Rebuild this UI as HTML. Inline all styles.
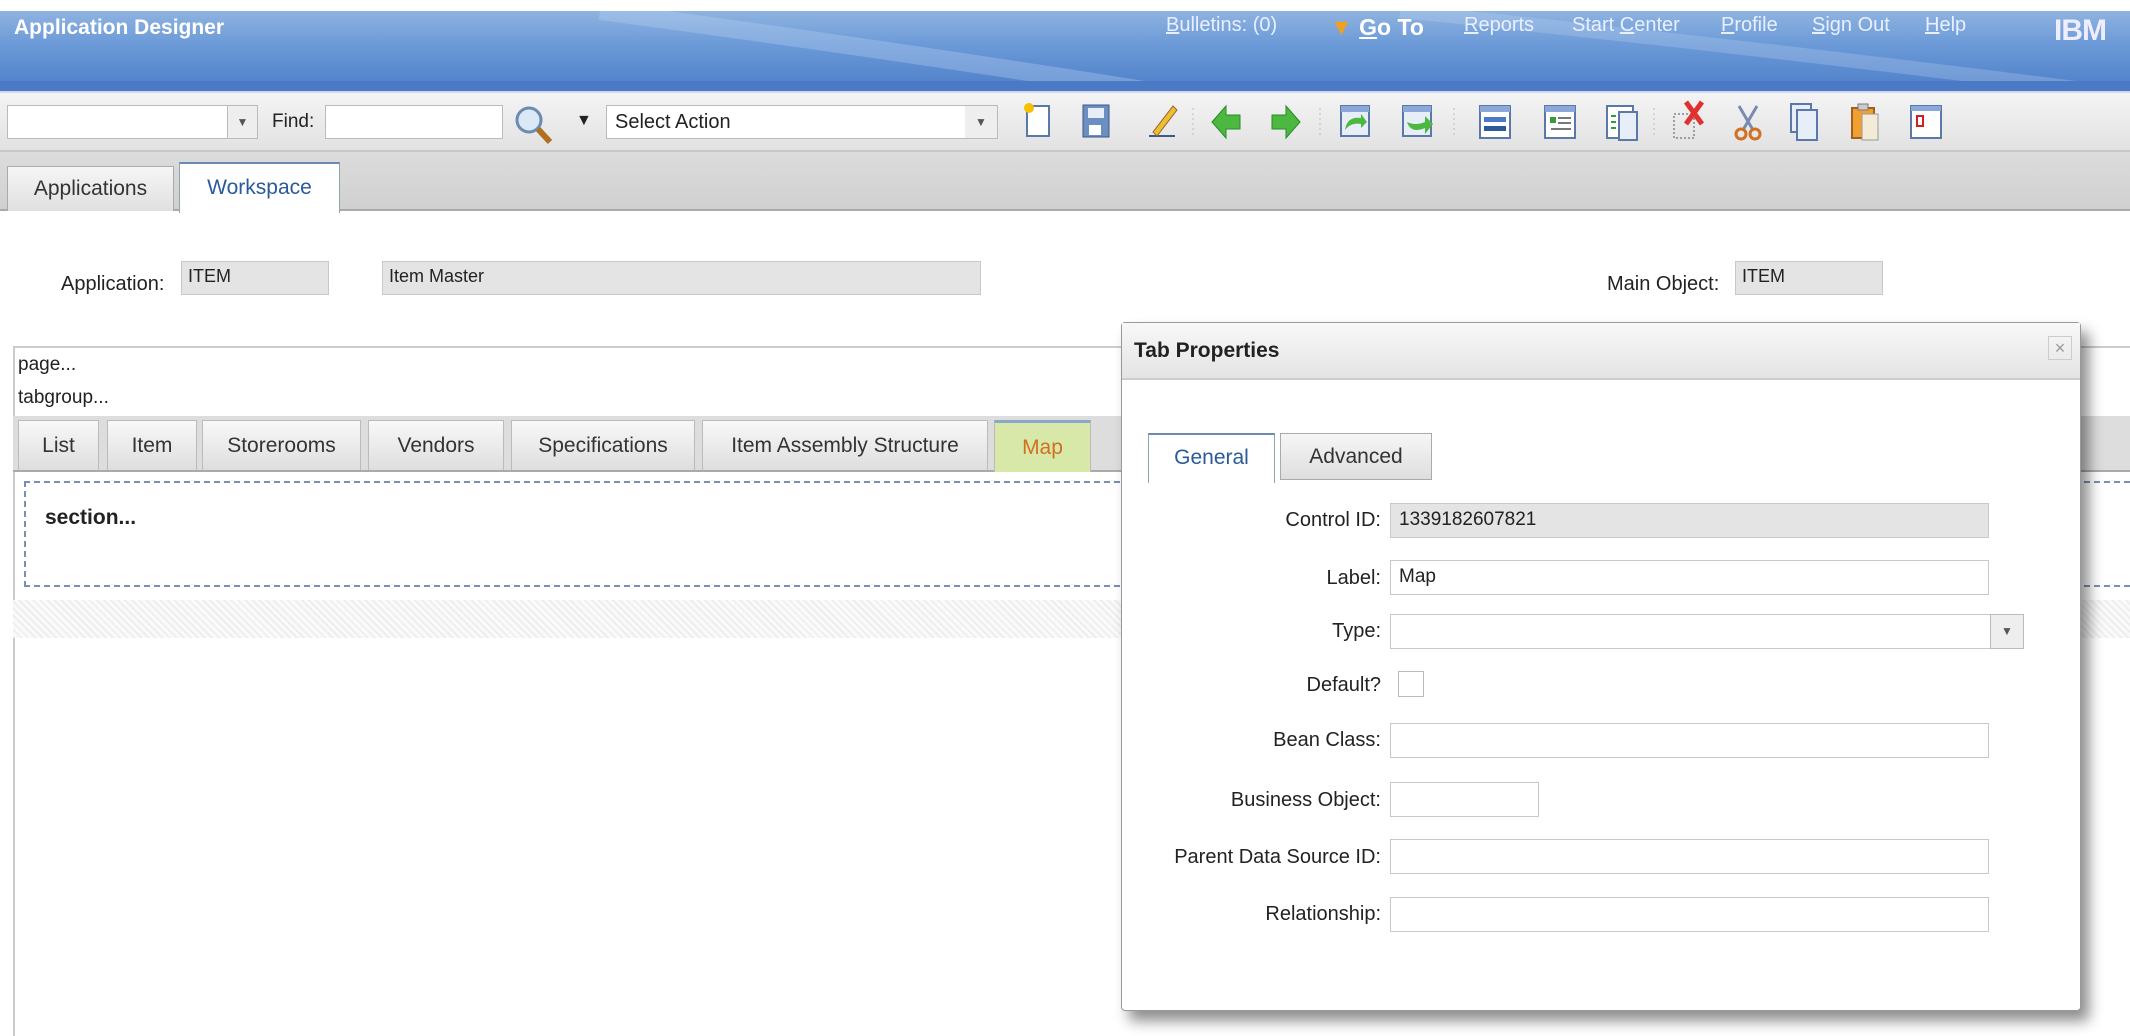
<!DOCTYPE html>
<html><head><meta charset="utf-8"><style>
*{box-sizing:border-box;margin:0;padding:0}
body{width:2130px;height:1032px;overflow:hidden;background:#fff;font-family:"Liberation Sans",Arial,sans-serif;color:#222;position:relative}
.a{position:absolute}
.hdr{left:0;top:11px;width:2130px;height:80px;background:linear-gradient(180deg,#8fb3e0 0%,#6d9bd8 40%,#5585cc 85%,#4a7bc8 100%)}
.hl{color:#e8f0ff;font-size:20px;top:14px}
.tb{left:0;top:91px;width:2130px;height:61px;background:linear-gradient(#f4f4f4,#e2e2e2);border-top:2px solid #cfd8e6;border-bottom:2px solid #c8c8c8}
.inp{background:#fff;border:1px solid #bbb}
.tabbar{left:0;top:152px;width:2130px;height:59px;background:linear-gradient(#dcdcdc,#d0d0d0);border-bottom:2px solid #aaa}
.lbl{font-size:19px;color:#222}
.gin{background:#e4e4e4;border:1px solid #c8c8c8;font-size:18px;padding:4px 6px}
.it{top:420px;height:50px;background:linear-gradient(#f8f8f8,#dedede);border:1px solid #bbb;border-bottom:none;font-size:21px;color:#333;text-align:center;line-height:50px}
.fl{font-size:20px;text-align:right;width:330px;left:1051px}
.fi{left:1390px;width:599px;height:35px;background:#fff;border:1px solid #c8c8c8}
</style></head><body>
<div class="a hdr">
<svg class="a" style="left:0;top:0" width="2130" height="80"><path d="M600 0 Q900 40 1150 80" stroke="#b8d0f0" stroke-width="18" fill="none" opacity=".35"/><path d="M1400 0 Q1700 30 2100 80" stroke="#b8d0f0" stroke-width="14" fill="none" opacity=".3"/><rect y="70" width="2130" height="10" fill="#4a79c6"/></svg>
<div class="a" style="left:14px;top:5px;color:#fff;font-weight:bold;font-size:21px">Application Designer</div>
<div class="a hl" style="left:1166px;top:3px"><u>B</u>ulletins: (0)</div>
<div class="a" style="left:1330px;top:3px;color:#fff;font-size:23px;font-weight:bold"><span style="color:#f0a020">▼</span> <u>G</u>o To</div>
<div class="a hl" style="left:1464px;top:3px"><u>R</u>eports</div>
<div class="a hl" style="left:1572px;top:3px">Start <u>C</u>enter</div>
<div class="a hl" style="left:1721px;top:3px"><u>P</u>rofile</div>
<div class="a hl" style="left:1812px;top:3px"><u>S</u>ign Out</div>
<div class="a hl" style="left:1925px;top:3px"><u>H</u>elp</div>
<div class="a" style="left:2054px;top:3px;color:#eef;font-size:30px;font-weight:bold;letter-spacing:-1px">IBM</div>
</div>
<div class="a tb"></div>
<div class="a inp" style="left:7px;top:105px;width:251px;height:34px"></div>
<div class="a" style="left:227px;top:105px;width:31px;height:34px;background:#eee;border:1px solid #bbb;font-size:12px;text-align:center;line-height:32px;color:#555">▼</div>
<div class="a lbl" style="left:272px;top:111px">Find:</div>
<div class="a inp" style="left:325px;top:105px;width:178px;height:34px"></div>
<svg class="a" style="left:512px;top:104px" width="44" height="44"><circle cx="17" cy="16" r="12" fill="#dbe9f7" stroke="#6c8bb0" stroke-width="3"/><path d="M26 25 L38 38" stroke="#b07020" stroke-width="6"/></svg>
<div class="a" style="left:576px;top:112px;font-size:16px">▼</div>
<div class="a inp" style="left:606px;top:105px;width:392px;height:34px;font-size:20px;padding:5px 8px">Select Action</div>
<div class="a" style="left:965px;top:106px;width:32px;height:32px;background:#eee;font-size:12px;text-align:center;line-height:32px;color:#555">▼</div>
<svg class="a" style="left:1008px;top:100px" width="940" height="44">
<g transform="translate(15,0)"><rect x="4" y="6" width="22" height="30" fill="#fff" stroke="#5a78a8" stroke-width="2"/><circle cx="6" cy="8" r="5" fill="#f5c000"/></g>
<g transform="translate(73,0)"><rect x="2" y="5" width="26" height="32" fill="#6d8ec0" stroke="#3a5a8a"/><rect x="7" y="8" width="16" height="10" fill="#e8eef8"/><rect x="8" y="25" width="12" height="10" fill="#fff"/></g>
<g transform="translate(137,0)"><path d="M4 36 L30 36" stroke="#3a5a8a" stroke-width="2"/><path d="M8 32 L28 6 L32 10 L12 36Z" fill="#e8c030" stroke="#a06030"/></g>
<path d="M185 8 V38 M312 8 V38 M446 8 V38 M646 8 V38" stroke="#bbb" stroke-dasharray="2 3"/>
<g transform="translate(202,0)"><path d="M2 22 L16 6 V15 H30 V29 H16 V38Z" fill="#4cb840" stroke="#2a8a2a"/></g>
<g transform="translate(262,0)"><path d="M30 22 L16 6 V15 H2 V29 H16 V38Z" fill="#4cb840" stroke="#2a8a2a"/></g>
<g transform="translate(331,0)"><rect x="2" y="6" width="28" height="30" fill="#e8eef8" stroke="#5a78a8" stroke-width="2"/><rect x="2" y="6" width="28" height="6" fill="#8aa8d8"/><path d="M6 30 Q8 16 22 18 L22 14 L28 22 L22 28 L22 24 Q12 22 6 30Z" fill="#4cb840"/></g>
<g transform="translate(393,0)"><rect x="2" y="6" width="28" height="30" fill="#e8eef8" stroke="#5a78a8" stroke-width="2"/><rect x="2" y="6" width="28" height="6" fill="#8aa8d8"/><path d="M6 22 Q10 34 24 28 L24 34 L32 24 L24 16 L24 22 Q14 26 6 22Z" fill="#4cb840"/></g>
<g transform="translate(470,0)"><rect x="2" y="6" width="30" height="32" fill="#fff" stroke="#5a78a8" stroke-width="2"/><rect x="2" y="6" width="30" height="6" fill="#8aa8d8"/><rect x="6" y="17" width="22" height="5" fill="#4a7bc8"/><rect x="6" y="26" width="22" height="5" fill="#2a5a9a"/></g>
<g transform="translate(535,0)"><rect x="2" y="6" width="30" height="32" fill="#fff" stroke="#5a78a8" stroke-width="2"/><rect x="2" y="6" width="30" height="6" fill="#8aa8d8"/><rect x="7" y="17" width="6" height="6" fill="#3a9a3a"/><path d="M15 18H28M15 23H28M8 29H28" stroke="#777" stroke-width="2"/></g>
<g transform="translate(597,0)"><rect x="2" y="6" width="26" height="32" fill="#fff" stroke="#5a78a8" stroke-width="2"/><rect x="14" y="12" width="18" height="28" fill="#e8eef8" stroke="#5a78a8" stroke-width="2"/><path d="M6 16H11M6 22H11M6 28H11" stroke="#3a9a3a" stroke-width="2"/></g>
<g transform="translate(664,0)"><rect x="2" y="14" width="20" height="24" fill="none" stroke="#555" stroke-dasharray="2 2"/><path d="M14 2 L30 24 M30 2 L14 24" stroke="#e03030" stroke-width="5"/></g>
<g transform="translate(723,0)"><path d="M8 6 L22 30 M26 6 L12 30" stroke="#7a8ab0" stroke-width="3"/><circle cx="10" cy="34" r="5" fill="none" stroke="#d07020" stroke-width="3"/><circle cx="24" cy="34" r="5" fill="none" stroke="#d07020" stroke-width="3"/></g>
<g transform="translate(780,0)"><rect x="3" y="4" width="20" height="28" fill="#e8eef8" stroke="#5a78a8" stroke-width="2"/><rect x="9" y="10" width="20" height="30" fill="#e8eef8" stroke="#5a78a8" stroke-width="2"/></g>
<g transform="translate(841,0)"><rect x="3" y="8" width="22" height="30" fill="#f0a030" stroke="#a06020" stroke-width="2"/><rect x="9" y="4" width="10" height="6" fill="#ccc" stroke="#777"/><rect x="13" y="14" width="16" height="26" fill="#f4ead8" stroke="#999"/></g>
<g transform="translate(901,0)"><rect x="2" y="6" width="30" height="32" fill="#fff" stroke="#5a78a8" stroke-width="2"/><rect x="2" y="6" width="30" height="5" fill="#8aa8d8"/><rect x="8" y="16" width="6" height="10" fill="#fff" stroke="#d02020" stroke-width="2"/></g>
</svg>
<div class="a tabbar"></div>
<div class="a" style="left:7px;top:166px;width:167px;height:45px;background:linear-gradient(#f6f6f6,#e0e0e0);border:1px solid #aaa;border-bottom:none;font-size:21px;text-align:center;line-height:44px;color:#333">Applications</div>
<div class="a" style="left:179px;top:162px;width:161px;height:51px;background:#fff;border:1px solid #8aa;border-top:2px solid #6c8ab0;border-bottom:none;font-size:21px;text-align:center;line-height:48px;color:#2a5a9a">Workspace</div>
<div class="a lbl" style="left:61px;top:273px;font-size:20px">Application:</div>
<div class="a gin" style="left:181px;top:261px;width:148px;height:34px">ITEM</div>
<div class="a gin" style="left:382px;top:261px;width:599px;height:34px">Item Master</div>
<div class="a lbl" style="left:1607px;top:273px;font-size:20px">Main Object:</div>
<div class="a gin" style="left:1735px;top:261px;width:148px;height:34px">ITEM</div>
<div class="a" style="left:13px;top:346px;width:2117px;height:690px;border-left:2px solid #ccc;border-top:2px solid #ccc"></div>
<div class="a" style="left:18px;top:354px;font-size:19px">page...</div>
<div class="a" style="left:18px;top:387px;font-size:19px">tabgroup...</div>
<div class="a" style="left:13px;top:416px;width:2117px;height:56px;background:#ddd;border-bottom:2px solid #aaa"></div>
<div class="a it" style="left:18px;width:81px">List</div>
<div class="a it" style="left:107px;width:90px">Item</div>
<div class="a it" style="left:202px;width:159px">Storerooms</div>
<div class="a it" style="left:368px;width:136px">Vendors</div>
<div class="a it" style="left:511px;width:184px">Specifications</div>
<div class="a it" style="left:702px;width:286px">Item Assembly Structure</div>
<div class="a it" style="left:994px;width:97px;background:#d8e8a8;color:#d07020;border-top:3px solid #8aa8c8;height:52px">Map</div>
<div class="a" style="left:24px;top:481px;width:2106px;height:106px;border:2px dashed #7a90b0;border-right:none"></div>
<div class="a" style="left:45px;top:506px;font-size:21px;font-weight:bold">section...</div>
<div class="a" style="left:13px;top:600px;width:2117px;height:38px;background:repeating-linear-gradient(45deg,#eee 0 2px,#fafafa 2px 5px)"></div>
<div class="a" style="left:1121px;top:322px;width:960px;height:689px;background:#fff;border:1px solid #999;border-radius:4px;box-shadow:8px 10px 14px rgba(0,0,0,.45)"></div>
<div class="a" style="left:1122px;top:323px;width:958px;height:57px;background:linear-gradient(#f8f8f8,#e4e4e4);border-bottom:2px solid #ccc"></div>
<div class="a" style="left:1134px;top:339px;font-size:21px;font-weight:bold">Tab Properties</div>
<div class="a" style="left:2048px;top:336px;width:24px;height:24px;border:1px solid #ccc;color:#999;text-align:center;line-height:22px;font-size:18px">×</div>
<div class="a" style="left:1148px;top:433px;width:127px;height:50px;background:#fff;border:1px solid #8aa;border-top:2px solid #6c8ab0;border-bottom:none;font-size:21px;text-align:center;line-height:46px;color:#2a5a9a">General</div>
<div class="a" style="left:1280px;top:433px;width:152px;height:47px;background:linear-gradient(#f6f6f6,#dedede);border:1px solid #aaa;font-size:21px;text-align:center;line-height:45px;color:#333">Advanced</div>
<div class="a fl" style="top:509px">Control ID:</div><div class="a fi" style="top:503px;background:#e4e4e4;font-size:19px;padding:5px 8px">1339182607821</div>
<div class="a fl" style="top:567px">Label:</div><div class="a fi" style="top:560px;font-size:19px;padding:5px 8px">Map</div>
<div class="a fl" style="top:620px">Type:</div><div class="a fi" style="top:614px;width:634px"></div><div class="a" style="left:1990px;top:614px;width:34px;height:35px;background:#eee;border:1px solid #bbb;font-size:12px;text-align:center;line-height:33px;color:#555">▼</div>
<div class="a fl" style="top:674px">Default?</div><div class="a" style="left:1398px;top:671px;width:26px;height:26px;border:1px solid #bbb;background:#fff"></div>
<div class="a fl" style="top:729px">Bean Class:</div><div class="a fi" style="top:723px"></div>
<div class="a fl" style="top:789px">Business Object:</div><div class="a fi" style="top:782px;width:149px"></div>
<div class="a fl" style="top:846px">Parent Data Source ID:</div><div class="a fi" style="top:839px"></div>
<div class="a fl" style="top:903px">Relationship:</div><div class="a fi" style="top:897px"></div>
</body></html>
